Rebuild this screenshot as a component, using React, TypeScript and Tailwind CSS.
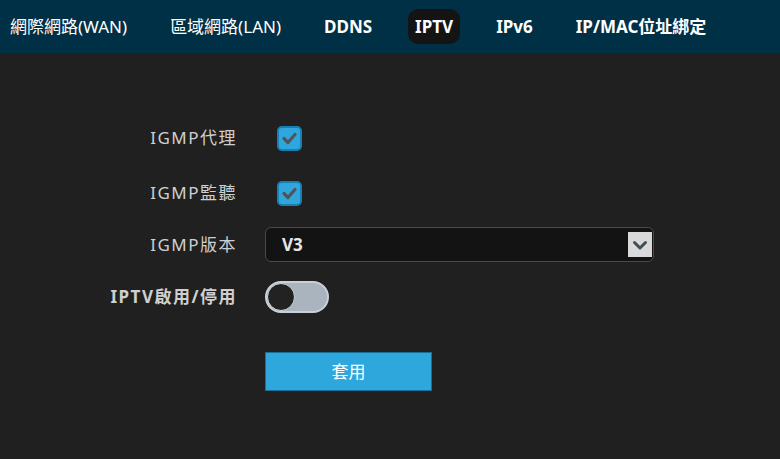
const tabs = ["網際網路(WAN)", "區域網路(LAN)", "DDNS", "IPTV", "IPv6", "IP/MAC位址綁定"];

const font = { fontFamily: '"Noto Sans", "Noto Sans CJK TC", sans-serif' };

function Checkbox() {
  return (
    <div className="ml-[12px] w-[25px] h-[25px] rounded-[5px] bg-[#2fa6dc] border-2 border-[#1680b5] flex items-center justify-center">
      <svg width="17" height="17" viewBox="0 0 17 17">
        <path d="M3 8.5 L7 12.5 L14 4.5" fill="none" stroke="#4f555a" strokeWidth="3.2" strokeLinecap="round" strokeLinejoin="round" />
      </svg>
    </div>
  );
}

function Row({ label, bold, children, h }: { label: string; bold?: boolean; children: React.ReactNode; h: string }) {
  return (
    <div className={`flex items-center ${h}`}>
      <div className={`w-[237px] text-right text-[17px] tracking-[1.5px] text-[#cfcfcf] ${bold ? "font-bold" : ""}`}>{label}</div>
      <div className="ml-[28px] flex items-center">{children}</div>
    </div>
  );
}

export default function App() {
  return (
    <div className="w-[780px] h-[459px] bg-[#202020] overflow-hidden" style={font}>
      <div className="h-[53px] bg-[#003045] flex items-center pl-[3px] gap-[29px]">
        {tabs.map((t) => (
          <div
            key={t}
            className={`px-[7px] h-[35px] flex items-center text-[17px] text-white rounded-[10px] ${t === "IPTV" ? "bg-[#141414]" : ""} ${t === "WAN" || t.includes("(") ? "" : "font-bold"}`}
          >
            {t}
          </div>
        ))}
      </div>

      <div className="pt-[68px]">
        <Row label="IGMP代理" h="h-[34px]">
          <Checkbox />
        </Row>
        <div className="h-[21px]" />
        <Row label="IGMP監聽" h="h-[34px]">
          <Checkbox />
        </Row>
        <div className="h-[17px]" />
        <Row label="IGMP版本" h="h-[35px]">
          <div className="w-[389px] h-[35px] rounded-[6px] bg-[#131313] border border-[#4a4a4a] flex items-center justify-between pl-[16px] pr-[1px]">
            <span className="text-[17px] text-[#e6e6e6] font-bold">V3</span>
            <div className="w-[24px] h-[25px] bg-[#d9d9d9] flex items-center justify-center">
              <svg width="16" height="12" viewBox="0 0 16 12">
                <path d="M2.5 3.5 L8 9 L13.5 3.5" fill="none" stroke="#3e4e58" strokeWidth="3" strokeLinecap="round" strokeLinejoin="round" />
              </svg>
            </div>
          </div>
        </Row>
        <div className="h-[18px]" />
        <Row label="IPTV啟用/停用" bold h="h-[34px]">
          <div className="w-[64px] h-[32px] rounded-full bg-[#aab4be] border-2 border-[#c8d0d8] flex items-center">
            <div className="w-[28px] h-[28px] rounded-full bg-[#222222] border border-[#d0d6dc]" />
          </div>
        </Row>
        <div className="h-[38px]" />
        <div className="ml-[265px] w-[167px] h-[39px] bg-[#2ea7dc] border border-[#1b6f96] flex items-center justify-center text-white text-[17px]">
          套用
        </div>
      </div>
    </div>
  );
}
